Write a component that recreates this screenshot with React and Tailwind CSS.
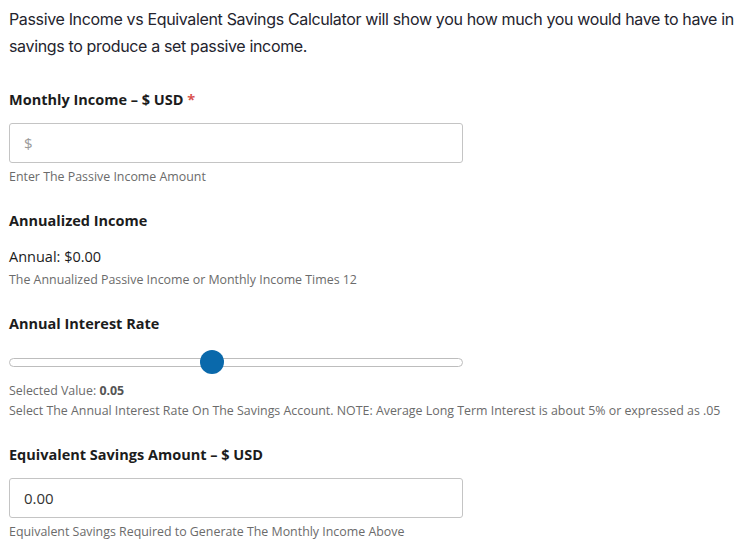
import { useState } from 'react';

export default function App() {
  const [rate, setRate] = useState(0.05);
  const label = "text-[14.5px] font-bold text-[#1c1c1c] leading-5";
  const help = "text-[12.4px] text-[#6b6b6b] leading-5";

  return (
    <div className="bg-white w-[748px] h-[551px] px-[9px] pt-[6px] font-['Open_Sans',sans-serif]">
      <p className="font-['Inter',sans-serif] text-[16px] leading-[27px] text-[#24242e] tracking-[-0.35px] whitespace-nowrap">
        Passive Income vs Equivalent Savings Calculator will show you how much you would have to have in
        <br />
        savings to produce a set passive income.
      </p>

      <div className="mt-[27px]">
        <label className={label}>
          Monthly Income – $ USD <span className="text-[#d9534f]">*</span>
        </label>
        <input
          type="text"
          placeholder="$"
          className="mt-[12px] block w-[454px] h-[40px] rounded-[3px] border border-[#c4c4c4] px-[14px] text-[15px] text-[#333] placeholder:text-[#9a9a9a] outline-none"
        />
        <p className={`${help} mt-[4px]`}>Enter The Passive Income Amount</p>
      </div>

      <div className="mt-[24px]">
        <p className={label}>Annualized Income</p>
        <p className="mt-[16px] text-[14.5px] text-[#1c1c1c] leading-5">Annual: $0.00</p>
        <p className={`${help} mt-[3px]`}>The Annualized Passive Income or Monthly Income Times 12</p>
      </div>

      <div className="mt-[24px]">
        <p className={label}>Annual Interest Rate</p>
        <input
          type="range"
          min="0.01"
          max="0.1"
          step="0.01"
          value={rate}
          onChange={(e) => setRate(parseFloat(e.target.value))}
          className="mt-[16px] block w-[454px] h-[24px] appearance-none bg-transparent cursor-pointer
            [&::-webkit-slider-runnable-track]:h-[9px] [&::-webkit-slider-runnable-track]:rounded-full [&::-webkit-slider-runnable-track]:border [&::-webkit-slider-runnable-track]:border-[#bdbdbd] [&::-webkit-slider-runnable-track]:bg-white
            [&::-webkit-slider-thumb]:appearance-none [&::-webkit-slider-thumb]:w-[24px] [&::-webkit-slider-thumb]:h-[24px] [&::-webkit-slider-thumb]:rounded-full [&::-webkit-slider-thumb]:bg-[#0a69ab] [&::-webkit-slider-thumb]:mt-[-8.5px]"
        />
        <p className={`${help} mt-[7px]`}>
          Selected Value: <span className="font-bold text-[#555]">{rate.toFixed(2)}</span>
        </p>
        <p className={help}>
          Select The Annual Interest Rate On The Savings Account. NOTE: Average Long Term Interest is about 5% or expressed as .05
        </p>
      </div>

      <div className="mt-[24px]">
        <p className={label}>Equivalent Savings Amount – $ USD</p>
        <input
          type="text"
          readOnly
          value="0.00"
          className="mt-[13px] block w-[454px] h-[40px] rounded-[3px] border border-[#c4c4c4] px-[14px] text-[15px] text-[#333] outline-none"
        />
        <p className={`${help} mt-[4px]`}>Equivalent Savings Required to Generate The Monthly Income Above</p>
      </div>
    </div>
  );
}
